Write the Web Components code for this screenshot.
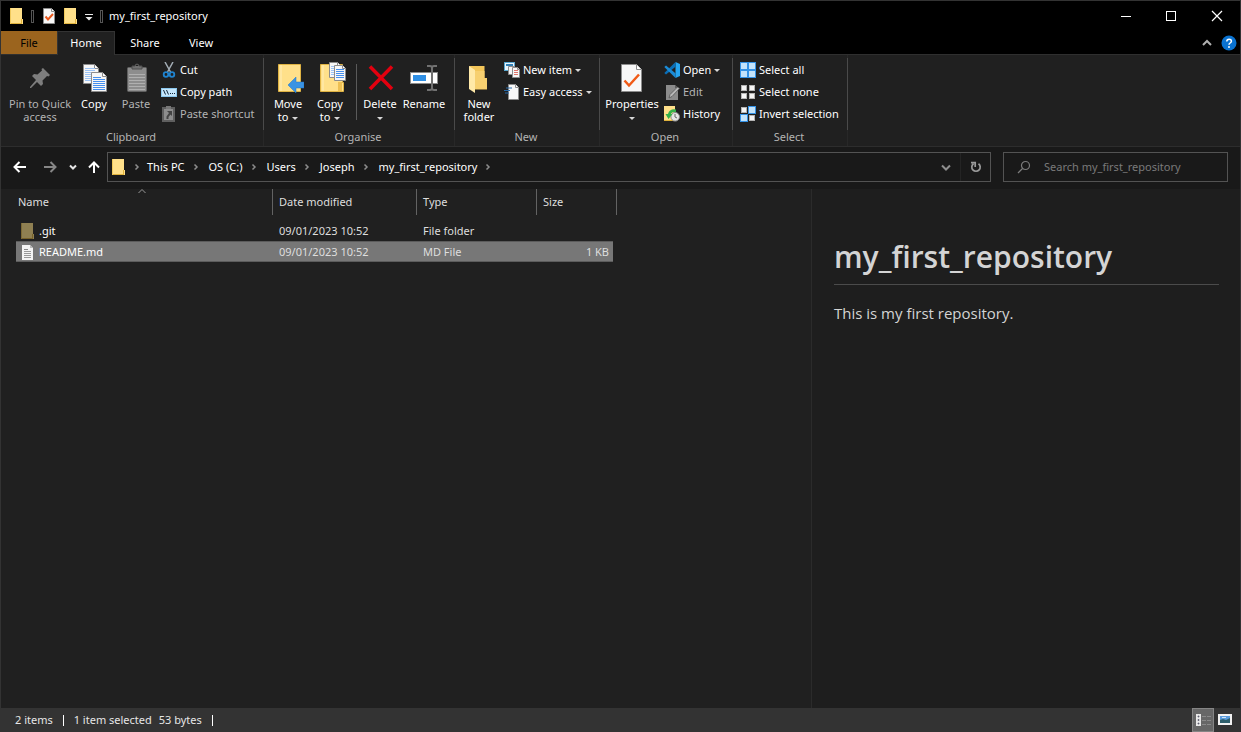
<!DOCTYPE html>
<html lang="en">
<head>
<meta charset="utf-8">
<title>my_first_repository</title>
<style>
html, body { margin: 0; height: 100%; background: #202020; }
body { display: flex; }
</style>
</head>
<body>
<explorer-window></explorer-window>
<script>
/* ---------- icon artwork ---------- */
const page = (x, y, w, h, f, lines) =>
  `<path d="M${x + .5} ${y + .5}h${w - f - 1}l${f} ${f}v${h - f - 1}h-${w - 1}z" fill="#f7f7f7" stroke="#8c8c8c"/>
   <path d="M${x + w - f - .5} ${y + .5}v${f}h${f}" fill="#fff" stroke="#8c8c8c"/>${lines || ''}`;
const rules = (x, y, w, n, step, color) =>
  Array.from({ length: n }, (_, i) => `<rect x="${x}" y="${y + i * step}" width="${w}" height="1" fill="${color}"/>`).join('');
const tile = (x, y, on) => on
  ? `<rect x="${x}" y="${y}" width="8" height="8" fill="#3492e6"/><rect x="${x + 1}" y="${y + 1}" width="6" height="6" fill="#c3e3fb"/>`
  : `<rect x="${x + .5}" y="${y + .5}" width="5" height="5" fill="#f5f5f5" stroke="#b4b4b4"/>`;
const folder16 = (a, b, c) =>
  `<path d="M1 0h12v11h1v5H1z" fill="${a}"/><path d="M1 15h12v1H1zM12 11h1v4h-1z" fill="${b}"/><path d="M1 0h1v16H1z" fill="${c}"/>`;

const ICONS = {
  folder: [16, folder16('#ffe08a', '#e0b23c', '#f0c95c')],
  folderDim: [16, folder16('#8f8052', '#77622a', '#7d6a35')],
  readme: [16, `<path d="M2 1h8l3 3v12H2z" fill="#f4f4f4"/><path d="M10 1v3h3z" fill="#b9b9b9"/>${rules(4, 5, 4, 1, 2, '#888')}${rules(4, 7, 7, 4, 2, '#999')}`],
  props16: [16, page(2, 0, 12, 16, 3, '<path d="M4.500 8.500l2.500 3 5-5.500" fill="none" stroke="#e8571c" stroke-width="2"/>')],
  pin: [32, '<path d="M19 6l7 7-1.500 1.500-1.500-.5-4.500 4.500.5 3.500-2 2-4-4L7 26H6v-1l6-7-4-4 2-2 3.500.5L18 8.500 17.500 7z" fill="#7d7d7d"/>'],
  copy: [32,
    page(5, 2, 16, 20, 4, rules(7, 6, 10, 7, 2, '#9cc3f5')) +
    page(13, 10, 16, 20, 4, rules(15, 15, 8, 1, 2, '#4690ee') + rules(15, 17, 12, 6, 2, '#4690ee'))],
  paste: [32, `<rect x="7.500" y="5.500" width="19" height="24" rx="1" fill="#8d8d8d" stroke="#606060"/>
    ${rules(9, 12, 16, 6, 3, '#b0b0b0')}<path d="M12 7V4h3a2 2 0 0 1 4 0h3v3z" fill="#707070" stroke="#4f4f4f"/><rect x="16" y="3" width="2" height="1" fill="#222"/>`],
  move: [32, `<path d="M6.500 2.500h22v27h-22z" fill="#ffe08a" stroke="#dfb343"/><path d="M9 3v26" stroke="#ffeebb" fill="none"/>
    <path d="M16 23l8-8v5h8v6h-8v5z" fill="#3a93e3" stroke="#2377c4" stroke-width=".5"/>`],
  copyTo: [32, `<path d="M6.500 2.500h22v18h1v9h-23z" fill="#ffe08a" stroke="#dfb343"/><path d="M9 3v26" stroke="#ffeebb" fill="none"/>
    <path d="M24 20h4v9h-4z" fill="#eec053"/>
    ${page(15, 0, 12, 16, 3, rules(17, 4, 7, 5, 2, '#9cc3f5'))}${page(20, 3, 12, 16, 3, rules(22, 7, 8, 5, 2, '#4690ee'))}`],
  del: [32, '<path d="M6 4.500L28 27M28 4.500L6 27" fill="none" stroke="#e3000f" stroke-width="3.500"/>'],
  rename: [32, `<rect x="2.500" y="10.500" width="27" height="11" fill="#fff" stroke="#8c8c8c"/><rect x="5" y="13" width="13" height="6" fill="#2f8fe4"/>
    <path d="M19 4h3q2 0 2 2v20q0 2-2 2h-3M29 4h-3q-2 0-2 2v20q0 2 2 2h3" fill="none" stroke="#717171" stroke-width="2"/>`],
  newFolder: [32, `<path d="M6 4h15.500v12H24v11.500H11z" fill="#f3c65a"/><path d="M12 9h9.500v7H24v11H12z" fill="#f7d070"/><path d="M6 4l6 4v23l-6-4z" fill="#ffe9a8"/>`],
  props: [32, page(5, 2, 21, 28, 5, '<path d="M8.500 18.500l4.500 5 10-11" fill="none" stroke="#f05a16" stroke-width="2.500"/>')],
  cut: [16, `<path d="M4 0l5.500 10M12 0L6.500 10" stroke="#a3adb5" stroke-width="1.500" fill="none"/>
    <circle cx="5" cy="12.500" r="2.300" fill="none" stroke="#1f83cf" stroke-width="1.800"/><circle cx="11" cy="12.500" r="2.300" fill="none" stroke="#1f83cf" stroke-width="1.800"/>`],
  path: [16, `<rect x=".5" y="4.500" width="15" height="8" fill="#c5e6fb" stroke="#8cc8ee"/>
    <path d="M2.500 6l2 4.500M5.500 6l2 4.500" stroke="#13263a" fill="none"/><path d="M9 9h1v1H9zM11 9h1v1h-1zM13 9h1v1h-1z" fill="#13263a"/>`],
  shortcut: [16, `<rect x="2" y="2" width="11" height="13" fill="#8d8d8d" stroke="#5f5f5f" stroke-width="2"/><rect x="5" y="0" width="5" height="3" fill="#777"/>
    <path d="M6 5h5v5L9.500 8.500 7.500 11v2H5.500v-2.500L8 7z" fill="#444"/>`],
  newItem: [16, `<rect x=".5" y=".5" width="10" height="8" fill="#e9f5fd" stroke="#58a6cf"/><rect x="2" y="2" width="7" height="2" fill="#2f7fb5"/>
    <path d="M4.500 4.500h6v8h-6z" fill="#f4f4f4" stroke="#8c8c8c"/>${page(8, 5, 8, 11, 2, rules(10, 8, 4, 3, 2, '#e0746a'))}`],
  easy: [16, page(4, 0, 11, 16, 3) + '<path d="M2 4h6M0 6.500h6M1 9h4" stroke="#2a6cab" stroke-width="1.200" fill="none"/>'],
  code: [16, `<path d="M11.500 0L16 2v12l-4.500 2z" fill="#26a5f0"/><path d="M11.500 0v4.800L2 12.500.3 11z" fill="#0a6fb8"/><path d="M11.500 16v-4.800L2 3.500.3 5z" fill="#1b8bd6"/>`],
  edit: [16, `<path d="M2 1h9l3 3v12H2z" fill="#8c8c8c"/><path d="M11 1v3h3z" fill="#5d5d5d"/><path d="M15.500 4.500L8 12.500 5 14l1-3.500 7.500-7.500z" fill="#b9b9b9" stroke="#555" stroke-width=".8"/>`],
  history: [16, `<path d="M0 0h11v15H0z" fill="#ffe08a"/><path d="M0 14h9v1H0z" fill="#e0b23c"/>
    <circle cx="11.200" cy="10.800" r="4.300" fill="#e6e6e6" stroke="#8c8c8c"/><path d="M11 8v3l2 1" stroke="#666" fill="none"/>
    <path d="M12 3.500Q5.500 2.500 4 8H1.500l3 5 4-5H7Q7.500 5.500 12 6z" fill="#35b24a"/>`],
  selAll: [16, tile(0, 0, 1) + tile(8, 0, 1) + tile(0, 8, 1) + tile(8, 8, 1)],
  selNone: [16, tile(1, 1) + tile(9, 1) + tile(1, 9) + tile(9, 9)],
  selInv: [16, tile(1, 1) + tile(8, 0, 1) + tile(0, 8, 1) + tile(9, 9)],
  qat: [16, '<path d="M4 6h8v1H4zM4.500 9h7L8 12.500z" fill="#e8e8e8"/>'],
  min: [16, '<path d="M4 8h10v1H4z" fill="#fff"/>'],
  max: [16, '<rect x="3.500" y="3.500" width="9" height="9" fill="none" stroke="#fff"/>'],
  close: [16, '<path d="M3 3l10 10M13 3L3 13" stroke="#fff" stroke-width="1.200" fill="none"/>'],
  up2: [16, '<path d="M4 10l4-4 4 4" stroke="#b0b0b0" stroke-width="2" fill="none"/>'],
  help: [16, '<circle cx="8" cy="8" r="7.500" fill="#0a72d0"/><path d="M5.800 6.500q0-2.300 2.300-2.300t2.300 2q0 1-1.200 1.800T8 9.800" fill="none" stroke="#fff" stroke-width="1.500"/><circle cx="8" cy="12" r="1" fill="#fff"/>'],
  back: [16, '<path d="M14 8H3M7.500 3L2.500 8l5 5" stroke="#fff" stroke-width="2" fill="none"/>'],
  fwd: [16, '<path d="M2 8h11M8.500 3l5 5-5 5" stroke="#868686" stroke-width="2" fill="none"/>'],
  recent: [16, '<path d="M5 6.500l3 3 3-3" stroke="#e6e6e6" stroke-width="2" fill="none"/>'],
  up: [16, '<path d="M8 14V3.500M3 8.500l5-5 5 5" stroke="#fff" stroke-width="2" fill="none"/>'],
  chev: [16, '<path d="M6.500 5.500L9 8l-2.500 2.500" stroke="#8c8c8c" stroke-width="1.500" fill="none"/>'],
  drop: [16, '<path d="M4 6.500l4 4 4-4" stroke="#8e8e8e" stroke-width="2" fill="none"/>'],
  refresh: [16, '<path d="M10.500 4.700A4.200 4.200 0 1 1 5.500 4.700M3 3.700h4.200V8" stroke="#9a9a9a" stroke-width="1.700" fill="none"/>'],
  search: [16, '<circle cx="9.500" cy="6.500" r="4" fill="none" stroke="#7c7c7c" stroke-width="1.200"/><path d="M6.500 9.500L2 14" stroke="#7c7c7c" stroke-width="1.200"/>'],
  sort: [16, '<path d="M4.500 10L8 6.500l3.500 3.500" stroke="#9a9a9a" stroke-width="1" fill="none"/>'],
  details: [16, `<path d="M1 2h5v12H1z" fill="#e8e8e8"/><path d="M3 4h1v1H3zM3 7.500h1v1H3zM3 11h1v1H3z" fill="#333" stroke="#667" stroke-width=".8"/>
    <path d="M7 4h4v1H7zM12 4h4v1h-4zM7 8h4v1H7zM12 8h4v1h-4zM7 12h4v1H7zM12 12h4v1h-4z" fill="#8a8a8a"/>`],
  thumbs: [16, `<rect x="1" y="2" width="14" height="11" fill="#f2f2f2"/><rect x="3" y="4" width="10" height="7" fill="#5a9bdc"/>
    <path d="M3 8l3-1 3 1 4-2v5H3z" fill="#2e5f6c"/><path d="M5 5h4v1H5z" fill="#cfe4f5"/>`],
};

/* ---------- element helper ---------- */
const define = (name, css, html) => {
  const tpl = document.createElement('template');
  tpl.innerHTML = `<style>*{box-sizing:border-box}button{font:inherit;color:inherit;background:none;border:0;padding:0;margin:0}${css}</style>${html}`;
  customElements.define(name, class extends HTMLElement {
    constructor() {
      super();
      this.attachShadow({ mode: 'open' }).append(tpl.content.cloneNode(true));
    }
  });
};

customElements.define('ui-icon', class extends HTMLElement {
  connectedCallback() {
    if (this.shadowRoot) return;
    const [size, art] = ICONS[this.getAttribute('name')];
    this.attachShadow({ mode: 'open' }).innerHTML =
      `<style>:host{display:inline-block;flex:none;width:${size}px;height:${size}px}svg{display:block}</style>
       <svg width="${size}" height="${size}" viewBox="0 0 ${size} ${size}" aria-hidden="true">${art}</svg>`;
  }
});

customElements.define('icon-button', class extends HTMLElement {
  connectedCallback() {
    if (this.shadowRoot) return;
    this.attachShadow({ mode: 'open' }).innerHTML =
      `<style>:host{display:flex;flex:none}
       button{display:flex;align-items:center;justify-content:center;width:100%;height:100%;padding:0;border:0;background:none}</style>
       <button type="button" aria-label="${this.getAttribute('label')}"><ui-icon name="${this.getAttribute('icon')}"></ui-icon></button>`;
  }
});

customElements.define('ribbon-button', class extends HTMLElement {
  connectedCallback() {
    if (this.shadowRoot) return;
    const off = this.hasAttribute('off'), caret = this.hasAttribute('menu') ? '<i></i>' : '';
    this.attachShadow({ mode: 'open' }).innerHTML =
      `<style>
       :host{display:block;flex:none}
       button{display:flex;flex-direction:column;align-items:center;width:100%;padding:0;border:0;background:none;font:inherit;color:${off ? '#b4b4b4' : '#fff'};white-space:nowrap}
       :host(:not([small])) button{gap:3px}
       :host([small]) button{flex-direction:row;gap:3px;height:22px}
       :host([small]) span{padding-bottom:2px}
       i{display:inline-block;vertical-align:middle;margin-left:4px;border:3px solid transparent;border-top-color:#d8d8d8;border-bottom:0}
       :host([small]) i{margin-left:3px}
       :host([below]) i{margin-left:0}
       </style>
       <button type="button"><ui-icon name="${this.getAttribute('icon')}"></ui-icon><span><slot></slot>${caret}</span></button>`;
  }
});

define('ribbon-group', `
  :host{display:flex;flex-direction:column;flex:none;position:relative;border-right:1px solid #282828}
  :host::after{content:"";position:absolute;right:-1px;top:3px;width:1px;height:72px;background:#4a4a4a}
  .body{display:flex;flex:1;align-items:flex-start;padding:0 3px}
  footer{text-align:center;color:#b4b4b4;line-height:15px;padding:0 2px 2px 0}
  ::slotted(.col){padding-top:4px}
  ::slotted(ribbon-button){padding-top:7px}
`, `<div class="body"><slot></slot></div><footer><slot name="label"></slot></footer>`);

define('title-bar', `
  :host{display:flex;align-items:center;height:30px;background:#000;color:#fff;padding-left:8px}
  .bar{width:3px;height:13px;border:1px solid #555}
  .title{flex:1;padding-left:6px}
  .quick{display:flex;align-items:center;flex:none}
  .quick .bar{margin:0 4px 0 6px}
  .quick .bar.end{margin:0 0 0 4px}
  icon-button{width:22px}
  .more{width:14px}
  .win{width:46px;height:30px}
`, `<div class="quick"><ui-icon name="folder"></ui-icon><span class="bar"></span>
    <icon-button icon="props16" label="Properties"></icon-button><icon-button icon="folder" label="New folder"></icon-button>
    <icon-button icon="qat" label="Customise Quick Access Toolbar" class="more"></icon-button><span class="bar end"></span></div>
  <div class="title">my_first_repository</div>
  <icon-button class="win" icon="min" label="Minimise"></icon-button><icon-button class="win" icon="max" label="Maximise"></icon-button><icon-button class="win" icon="close" label="Close"></icon-button>`);

define('ribbon-tabs', `
  :host{display:flex;height:24px;background:#000;color:#fff;border-bottom:1px solid #2f2f2f}
  button{width:56px;height:23px}
  .file{background:#9b641e;color:#000}
  .on{width:58px;height:24px;background:#202020;border:1px solid #333;border-bottom:0;padding-bottom:2px}
  .wide{width:60px}
  .wide+.wide{width:52px}
  .end{display:flex;margin-left:auto}
  icon-button{width:22px}
`, `<button type="button" class="file">File</button><button type="button" class="on">Home</button><button type="button" class="wide">Share</button><button type="button" class="wide">View</button>
  <div class="end"><icon-button icon="up2" label="Minimise the Ribbon"></icon-button><icon-button icon="help" label="Help"></icon-button></div>`);

define('ribbon-panel', `
  :host{display:flex;background:#202020;height:92px;line-height:13px;border-bottom:1px solid #2d2d2d}
  .col{display:flex;flex-direction:column}
  .w40{width:42px}.w46{width:46px}.w58{width:58px}.w66{width:66px}
  hr{width:1px;height:56px;margin:9px 2px 0 5px;border:0;background:#5a5a5a}
`, `
  <ribbon-group style="width:263px"><span slot="label">Clipboard</span>
    <ribbon-button class="w66" icon="pin" off style="margin-left:3px">Pin to Quick<br>access</ribbon-button>
    <ribbon-button class="w40" icon="copy">Copy</ribbon-button>
    <ribbon-button class="w40" icon="paste" off>Paste</ribbon-button>
    <div class="col" style="margin-left:4px">
      <ribbon-button small icon="cut">Cut</ribbon-button><ribbon-button small icon="path">Copy path</ribbon-button><ribbon-button small icon="shortcut" off>Paste shortcut</ribbon-button>
    </div>
  </ribbon-group>
  <ribbon-group style="width:191px"><span slot="label">Organise</span>
    <ribbon-button class="w40" icon="move" menu>Move<br>to</ribbon-button>
    <ribbon-button class="w40" icon="copyTo" menu>Copy<br>to</ribbon-button>
    <hr>
    <ribbon-button class="w40" icon="del" menu below>Delete<br></ribbon-button>
    <ribbon-button class="w46" icon="rename">Rename</ribbon-button>
  </ribbon-group>
  <ribbon-group style="width:145px"><span slot="label">New</span>
    <ribbon-button class="w40" icon="newFolder">New<br>folder</ribbon-button>
    <div class="col" style="margin-left:4px">
      <ribbon-button small icon="newItem" menu>New item</ribbon-button><ribbon-button small icon="easy" menu>Easy access</ribbon-button>
    </div>
  </ribbon-group>
  <ribbon-group style="width:133px"><span slot="label">Open</span>
    <ribbon-button class="w58" icon="props" menu below>Properties<br></ribbon-button>
    <div class="col" style="margin-left:3px">
      <ribbon-button small icon="code" menu>Open</ribbon-button><ribbon-button small icon="edit" off>Edit</ribbon-button><ribbon-button small icon="history">History</ribbon-button>
    </div>
  </ribbon-group>
  <ribbon-group style="width:115px"><span slot="label">Select</span>
    <div class="col" style="margin-left:4px">
      <ribbon-button small icon="selAll">Select all</ribbon-button><ribbon-button small icon="selNone">Select none</ribbon-button><ribbon-button small icon="selInv">Invert selection</ribbon-button>
    </div>
  </ribbon-group>`);

define('address-crumbs', `
  :host{display:flex;align-items:center;flex:1;min-width:0;border:1px solid #535353;height:30px;color:#fff;padding-left:3px}
  a{color:inherit;text-decoration:none;white-space:nowrap}
  ui-icon[name=chev]{margin:0 5px 0 3px}
  ui-icon[name=folder]+ui-icon[name=chev]{margin:0 2px}
  .end{display:flex;margin-left:auto;height:100%}
  icon-button{width:30px}
  icon-button+icon-button{border-left:1px solid #242424}
  .drop{width:28px}
`, `<ui-icon name="folder"></ui-icon><ui-icon name="chev"></ui-icon><a href="#pc">This PC</a><ui-icon name="chev"></ui-icon><a href="#c">OS (C:)</a><ui-icon name="chev"></ui-icon><a href="#users">Users</a><ui-icon name="chev"></ui-icon><a href="#joseph">Joseph</a><ui-icon name="chev"></ui-icon><a href="#repo">my_first_repository</a><ui-icon name="chev"></ui-icon>
  <div class="end"><icon-button class="drop" icon="drop" label="Previous locations"></icon-button><icon-button icon="refresh" label="Refresh"></icon-button></div>`);

define('search-box', `
  :host{display:block;flex:none;width:225px}
  label{display:flex;align-items:center;height:30px;border:1px solid #535353;padding:0 12px;gap:12px}
  input{flex:1;min-width:0;font:inherit;color:#fff;background:none;border:0;padding:0;outline:0}
  input::placeholder{color:#7a7a7a;opacity:1}
`, `<label><ui-icon name="search"></ui-icon><input type="text" aria-label="Search my_first_repository" placeholder="Search my_first_repository"></label>`);

define('nav-bar', `
  :host{display:flex;box-sizing:border-box;align-items:center;height:42px;background:#191919;padding:0 12px 2px 4px}
  icon-button{width:30px;height:30px}
  .thin{width:16px}
  .up{width:26px}
  search-box{margin-left:12px}
`, `<icon-button icon="back" label="Back"></icon-button><icon-button icon="fwd" label="Forward"></icon-button><icon-button class="thin" icon="recent" label="Recent locations"></icon-button><icon-button class="up" icon="up" label="Up"></icon-button>
  <address-crumbs></address-crumbs><search-box></search-box>`);

define('file-list', `
  :host{display:block;flex:1;min-width:0;background:#202020;color:#dedede;padding-left:15px}
  table{border-collapse:separate;border-spacing:0;table-layout:fixed;width:601px}
  th{position:relative;height:26px;font-weight:400;text-align:left;padding:0 6px;border-right:1px solid #636363}
  th:first-child{padding-left:2px}
  th ui-icon{position:absolute;left:50%;margin-left:-10px;top:-6px}
  .gap td{height:5px;padding:0}
  td{height:21px;padding:0 6px}
  td:first-child{padding-left:4px}
  td:last-child{text-align:right;border-right:4px solid transparent;background-clip:padding-box;padding-right:4px}
  .sel td{background-color:#777;box-shadow:inset 0 1px #5c5c5c,inset 0 -1px #5c5c5c}
  .name{display:flex;align-items:center;gap:3px;color:#fff}
`, `<table><colgroup><col style="width:257px"><col style="width:144px"><col style="width:120px"><col style="width:80px"></colgroup>
  <thead><tr><th>Name<ui-icon name="sort"></ui-icon></th><th>Date modified</th><th>Type</th><th>Size</th></tr></thead>
  <tbody><tr class="gap"><td></td><td></td><td></td><td></td></tr>
  <tr><td><span class="name"><ui-icon name="folderDim"></ui-icon>.git</span></td><td>09/01/2023 10:52</td><td>File folder</td><td></td></tr>
  <tr class="sel"><td><span class="name"><ui-icon name="readme"></ui-icon>README.md</span></td><td>09/01/2023 10:52</td><td>MD File</td><td>1 KB</td></tr></tbody></table>`);

define('preview-pane', `
  :host{display:block;flex:none;width:429px;background:#1e1e1e;border-left:1px solid #2b2b2b;box-sizing:border-box;color:#d4d4d4;font-family:"Open Sans","Noto Sans",sans-serif;padding:48px 21px 0 22px}
  ::slotted(h1){margin:0 0 16px;font-size:30px;line-height:40px;font-weight:600;padding-bottom:7px;border-bottom:1px solid #4b4b4b}
  ::slotted(p){margin:0;font-size:15px;line-height:24px}
`, `<slot></slot>`);

define('status-bar', `
  :host{display:flex;align-items:center;height:24px;background:#333;color:#e6e6e6;padding-left:14px}
  .sep{width:1px;height:11px;background:#fff;margin:0 10px}
  .gap{margin-left:7px}
  .views{display:flex;margin-left:auto;height:100%;padding-right:4px}
  icon-button{width:22px}
  .on{background:#676767;border:1px solid #858585}
`, `<span>2 items</span><span class="sep"></span><span>1 item selected</span><span class="gap">53 bytes</span><span class="sep"></span>
  <div class="views"><icon-button class="on" icon="details" label="Details view"></icon-button><icon-button icon="thumbs" label="Large icons view"></icon-button></div>`);

define('explorer-window', `
  :host{display:flex;flex-direction:column;flex:1;min-width:0;border:1px solid #333;border-bottom:0;background:#202020;font:11px/16px "Noto Sans","Open Sans",sans-serif}
  main{display:flex;flex:1;min-height:0}
`, `<title-bar></title-bar><ribbon-tabs></ribbon-tabs><ribbon-panel></ribbon-panel><nav-bar></nav-bar>
  <main><file-list></file-list><preview-pane><h1>my_first_repository</h1><p>This is my first repository.</p></preview-pane></main>
  <status-bar></status-bar>`);
</script>
</body>
</html>
